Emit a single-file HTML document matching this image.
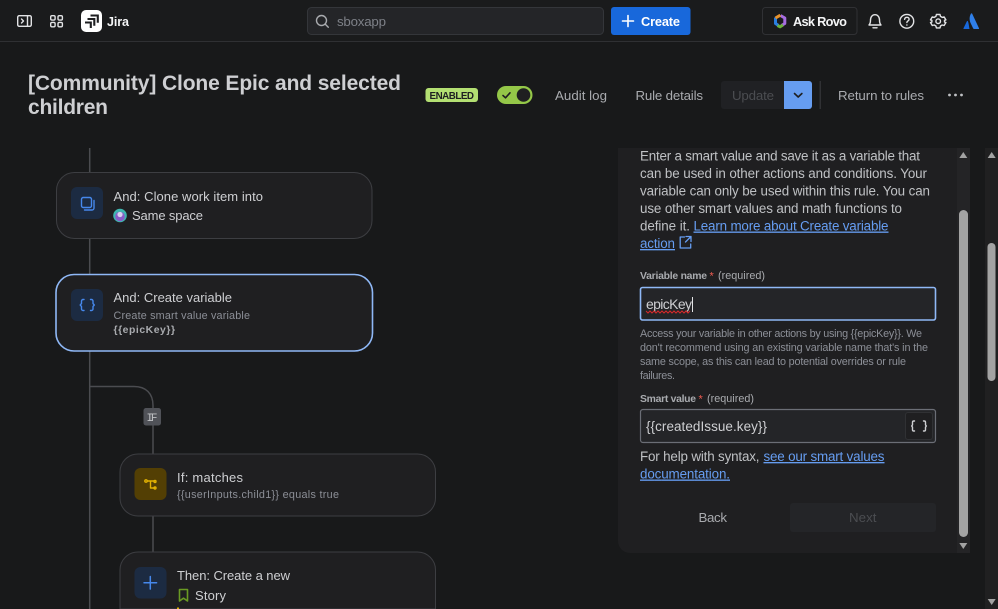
<!DOCTYPE html>
<html><head><meta charset="utf-8"><title>Jira</title>
<style>
html,body{margin:0;padding:0;background:#18191a;width:998px;height:609px;overflow:hidden}
svg{display:block}
text{font-family:"Liberation Sans",sans-serif;font-size:13px;fill:#cecfd2;white-space:pre}
.b{font-weight:bold}
.s{font-size:10.8px;fill:#8c8f97}
.n{font-size:13.3px;fill:#a9abaf}
.p{font-size:13.4px;fill:#bfc1c4}
.l{font-size:13.4px;fill:#669df1;text-decoration:underline}
.lb{font-size:10.4px;fill:#a9abaf;font-weight:bold}
.ic{fill:none;stroke-linecap:round;stroke-linejoin:round}
</style></head><body>
<svg width="998" height="609" viewBox="0 0 998 609" xmlns="http://www.w3.org/2000/svg">
<rect width="998" height="609" fill="#18191a"/>
<!-- top nav -->
<rect width="998" height="41" fill="#1a1b1c"/>
<rect y="41" width="998" height="1" fill="#2f3033"/>
<g class="ic" stroke="#e2e3e5" stroke-width="1.4">
<rect x="17.7" y="15.7" width="13.6" height="10.6" rx="1.5"/>
<path d="M27.5 16v10M21.5 19l2 2-2 2"/>
<rect x="50.7" y="15.7" width="4.4" height="4.4" rx="1.3"/>
<rect x="58" y="15.7" width="4.4" height="4.4" rx="1.3"/>
<rect x="50.7" y="22.4" width="4.4" height="4.4" rx="1.3"/>
<rect x="58" y="22.4" width="4.4" height="4.4" rx="1.3"/>
</g>
<rect x="81" y="10" width="21" height="22" rx="5" fill="#fff"/>
<path fill="none" stroke="#1e1f21" stroke-width="2.1" d="M90.500 15.500h7.300v7.300M87.500 19h6.800v6.800M85 22.500h5.800v5.500"/>
<text x="107" y="26" class="b" textLength="22" style="fill:#f4f5f6;font-size:12.5px">Jira</text>
<rect x="307.500" y="7.500" width="296" height="27" rx="4" fill="#242528" stroke="#34363a"/>
<g class="ic" stroke="#a9abaf" stroke-width="1.400"><circle cx="321.500" cy="20.500" r="5"/><path d="M325.300 24.300l3 3"/></g>
<text x="337" y="26" class="n" style="fill:#7e8188" textLength="49">sboxapp</text>
<rect x="611" y="7" width="79.500" height="28" rx="3" fill="#1868db"/>
<path class="ic" stroke="#fff" stroke-width="1.600" d="M628 15.500v11M622.500 21h11"/>
<text x="641" y="26" class="b" style="font-size:12.8px;fill:#fff" textLength="39">Create</text>
<rect x="762.500" y="7.500" width="94.500" height="27" rx="3" fill="#1a1b1c" stroke="#303134"/>
<g fill="none" stroke-width="3" stroke-linejoin="round">
<path stroke="#2a7fe0" d="M775.500 17.500V23.500L778.500 25.500"/>
<path stroke="#a66de0" d="M780.500 15.500L784.800 18V23.500L781.500 25.500"/>
<path stroke="#6cb33a" d="M777.500 25.500L780 26.800 783 25"/>
<path stroke="#e8932c" d="M775.500 18L780.300 15.200"/>
</g>
<text x="793" y="26" class="b" style="font-size:12.8px;fill:#f4f5f6" textLength="54">Ask Rovo</text>
<g class="ic" stroke="#e2e3e5" stroke-width="1.400">
<path d="M869 25c1.300-1.300 1.500-2.800 1.500-5 0-3.100 1.900-5.300 4.500-5.300s4.500 2.200 4.500 5.300c0 2.200.2 3.700 1.500 5z"/><path d="M873 27.800h4"/>
<circle cx="906.800" cy="21.300" r="6.900"/><path d="M904.600 19.300c.2-1.300 1.100-2 2.300-2 1.300 0 2.200.8 2.200 1.900 0 1.700-2.200 1.700-2.200 3.300M906.900 25v.1"/>
<circle cx="938.200" cy="21.200" r="2.300"/>
<path transform="translate(.2 .2)" d="M936.200 14.300H939.800L940.300 16.200 942 17.200 943.900 16.700 945.700 19.700 944.300 20.100V21.900L945.700 22.300 943.900 25.300 942 24.800 940.300 25.800 939.800 27.700H936.200L935.700 25.800 934 24.800 932.100 25.300 930.300 22.300 931.700 21.900V20.100L930.300 19.700 932.100 16.700 934 17.200 935.700 16.200Z"/>
</g>
<path d="M969.500 29h-5.500c-.5 0-.7-.4-.5-.8l3.400-7c.3-.5.8-.4 1 .1.800 1.800 1 4.600 1.600 7.700z" fill="#1868db"/>
<path d="M971 13.500c-2 3.500-1.600 7.200-.2 10l2.300 4.800c.2.400.4.700.9.700h4.500c.5 0 .7-.4.500-.8l-6.800-14.400c-.3-.6-.5-.6-.7-.3z" fill="#2f7fe8"/>

<!-- header -->
<text x="28" y="90" class="b" style="font-size:21px;fill:#cecfd2" textLength="373">[Community] Clone Epic and selected</text>
<text x="28" y="114" class="b" style="font-size:21px;fill:#cecfd2" textLength="80">children</text>
<rect x="425.500" y="88" width="52.500" height="14" rx="3" fill="#b3df72"/>
<text x="429.500" y="99" class="b" style="font-size:9.800px;fill:#1e1f21" textLength="44.500">ENABLED</text>
<rect x="497" y="86" width="35.500" height="18" rx="9" fill="#94c748"/>
<path class="ic" stroke="#1e1f21" stroke-width="1.600" d="M503 95.500l2.500 2.300 4.500-5"/>
<circle cx="523.500" cy="95" r="6.800" fill="#1f1f21"/>
<text x="555" y="100" class="n" textLength="52">Audit log</text>
<text x="635.500" y="100" class="n" textLength="67.500">Rule details</text>
<path d="M721 84a3 3 0 0 1 3-3h60v28h-60a3 3 0 0 1-3-3z" fill="#202124"/>
<text x="732" y="100" class="n" style="fill:#4b4d51" textLength="42">Update</text>
<path d="M784 81h25a3 3 0 0 1 3 3v22a3 3 0 0 1-3 3h-25z" fill="#669df1"/>
<path class="ic" stroke="#1e1f21" stroke-width="1.600" d="M794.500 93.500l3.700 3.500 3.700-3.500"/>
<rect x="819.500" y="81" width="1.500" height="28" fill="#303134"/>
<text x="838" y="100" class="n" textLength="86">Return to rules</text>
<g fill="#bfc1c4"><circle cx="949.500" cy="95" r="1.400"/><circle cx="955.500" cy="95" r="1.400"/><circle cx="961.500" cy="95" r="1.400"/></g>

<!-- connectors -->
<g fill="none" stroke="#4b4c50" stroke-width="1.500">
<path d="M89.700 148V609"/>
<path d="M90 386.500h44c12 0 19 7 19 19V552"/>
</g>

<!-- card 1 -->
<rect x="56.500" y="172.500" width="315.500" height="66" rx="18" fill="#1f1f21" stroke="#3d3e42"/>
<rect x="71" y="187" width="32" height="32" rx="6" fill="#1c2b42"/>
<g class="ic" stroke="#4688ec" stroke-width="1.400"><rect x="81.500" y="197.500" width="10" height="10" rx="1.800"/><path d="M94 200.500v7.500a2 2 0 0 1-2 2h-7.500"/></g>
<text x="113.500" y="201" textLength="149.500">And: Clone work item into</text>
<circle cx="120" cy="215.500" r="6.800" fill="#3fb5b0"/><circle cx="120" cy="216.500" r="4.800" fill="#8a5cc9"/><circle cx="120" cy="214.500" r="2.600" fill="#d8d3f0"/>
<text x="132" y="220" textLength="71">Same space</text>

<!-- card 2 -->
<rect x="56" y="274.500" width="316.500" height="76.500" rx="18" fill="#1f1f21" stroke="#8fb8f6" stroke-width="1.600"/>
<rect x="71" y="289" width="32" height="32" rx="6" fill="#1c2b42"/>
<path class="ic" stroke="#4688ec" stroke-width="1.400" d="M84 299.500h-1a1.500 1.500 0 0 0-1.500 1.500v2.500l-1.300 1.500 1.300 1.500v2.500a1.500 1.500 0 0 0 1.500 1.500h1M90.500 299.500h1a1.500 1.500 0 0 1 1.500 1.500v2.500l1.300 1.500-1.300 1.500v2.500a1.500 1.500 0 0 1-1.500 1.500h-1"/>
<text x="113.500" y="302" textLength="118.500">And: Create variable</text>
<text x="113.500" y="319" class="s" textLength="136.500">Create smart value variable</text>
<text x="113.500" y="333" class="s b" style="fill:#a9abaf;font-size:10.400px" textLength="61.500">{{epicKey}}</text>

<!-- IF -->
<rect x="143.500" y="408" width="17.500" height="17.500" rx="2.500" fill="#505258"/>
<text x="146.500" y="421" style="font-family:'Liberation Mono',monospace;font-size:11px;fill:#bfc1c4" textLength="11">IF</text>

<!-- card 3 -->
<rect x="120" y="454" width="315.500" height="62" rx="18" fill="#1f1f21" stroke="#3d3e42"/>
<rect x="134.500" y="468" width="32" height="32" rx="6" fill="#533f04"/>
<g class="ic" stroke="#e2b203" stroke-width="1.400"><circle cx="146" cy="481" r="1.200"/><circle cx="155" cy="481.500" r="1"/><circle cx="155" cy="488" r="1"/><path d="M147.500 481h7M150.500 481v7h4"/></g>
<text x="177" y="482" textLength="66">If: matches</text>
<text x="177" y="498" class="s" textLength="162">{{userInputs.child1}} equals true</text>

<!-- card 4 -->
<path d="M120 609V570a18 18 0 0 1 18-18H417.500a18 18 0 0 1 18 18V609z" fill="#1f1f21" stroke="#3d3e42"/>
<rect x="134.500" y="567" width="32" height="31.500" rx="6" fill="#1c2b42"/>
<path class="ic" stroke="#4688ec" stroke-width="1.500" d="M150.300 576.500v12.500M144 582.800h12.600"/>
<text x="177" y="580" textLength="113">Then: Create a new</text>
<path class="ic" stroke="#6a9a23" stroke-width="1.600" d="M179.500 589.500h8v11.500l-4-2.800-4 2.800z"/>
<text x="195" y="600" textLength="31">Story</text>
<rect x="177" y="607.500" width="2" height="1.500" fill="#e2b203"/>

<!-- right panel -->
<path d="M618 148H970V553H630a12 12 0 0 1-12-12z" fill="#1f1f21"/>
<rect x="957" y="148" width="13" height="405" fill="#242426"/>
<rect x="959" y="210" width="9" height="327" rx="4.500" fill="#a3a3a3"/>
<path d="M963.300 152l4 6h-8z" fill="#a3a3a3"/><path d="M959.300 543h8l-4 6z" fill="#a3a3a3"/>
<rect x="985" y="148" width="13" height="461" fill="#202021"/>
<rect x="987.500" y="243" width="8" height="138" rx="4" fill="#a3a3a3"/>
<path d="M991.700 152l4 6h-8z" fill="#a3a3a3"/><path d="M987.700 599h8l-4 6z" fill="#a3a3a3"/>
<text x="640" y="160.500" class="p" textLength="280">Enter a smart value and save it as a variable that</text>
<text x="640" y="178" class="p" textLength="287">can be used in other actions and conditions. Your</text>
<text x="640" y="195.500" class="p" textLength="290">variable can only be used within this rule. You can</text>
<text x="640" y="213" class="p" textLength="262">use other smart values and math functions to</text>
<text x="640" y="230.500" class="p" textLength="50">define it.</text>
<text x="693.500" y="230.500" class="l" textLength="195">Learn more about Create variable</text>
<text x="640" y="248" class="l" textLength="35">action</text>
<path class="ic" stroke="#669df1" stroke-width="1.300" d="M684.500 237h-4.300v11h10.500v-4M686 236.500h5v5M691 236.500l-5.500 5.500"/>
<text x="640" y="279" class="lb" textLength="67">Variable name</text>
<text x="709.500" y="279.500" style="font-size:11px;fill:#f15b50">*</text>
<text x="718" y="279" class="s" style="fill:#a9abaf" textLength="47">(required)</text>
<rect x="640.500" y="287.500" width="295" height="32.500" rx="2" fill="#242528" stroke="#8fb8f6" stroke-width="1.600"/>
<text x="646" y="309" style="font-size:14px" textLength="46">epicKey</text>
<rect x="692" y="297" width="1" height="15" fill="#e2e3e5"/>
<path fill="none" stroke="#d8282a" stroke-width="1" d="M646 311l2 2 2-2 2 2 2-2 2 2 2-2 2 2 2-2 2 2 2-2 2 2 2-2 2 2 2-2 2 2 2-2 2 2 2-2 2 2 2-2 2 2 2-2"/>
<text x="640" y="337" class="s" textLength="282">Access your variable in other actions by using {{epicKey}}. We</text>
<text x="640" y="351" class="s" textLength="288">don't recommend using an existing variable name that's in the</text>
<text x="640" y="365" class="s" textLength="266">same scope, as this can lead to potential overrides or rule</text>
<text x="640" y="379" class="s" textLength="35">failures.</text>
<text x="640" y="402" class="lb" textLength="56">Smart value</text>
<text x="698.500" y="402.500" style="font-size:11px;fill:#f15b50">*</text>
<text x="707" y="402" class="s" style="fill:#a9abaf" textLength="47">(required)</text>
<rect x="640.500" y="409.500" width="295" height="33" rx="2.500" fill="#242528" stroke="#6b6e76" stroke-width="1.200"/>
<text x="646" y="431" style="font-size:13.500px" textLength="121">{{createdIssue.key}}</text>
<rect x="905.500" y="412.500" width="27" height="27" rx="2.500" fill="#1f1f21" stroke="#303134"/>
<path class="ic" stroke="#cecfd2" stroke-width="1.400" d="M914.500 421h-.7a1.300 1.300 0 0 0-1.300 1.300v2.500l-.8 1.200.8 1.200v2.500a1.300 1.300 0 0 0 1.300 1.300h.7M923.500 421h.7a1.300 1.300 0 0 1 1.300 1.300v2.500l.8 1.200-.8 1.200v2.500a1.300 1.300 0 0 1-1.300 1.300h-.7"/>
<text x="640" y="461" class="p" textLength="119.500">For help with syntax,</text>
<text x="763.500" y="461" class="l" textLength="121">see our smart values</text>
<text x="640" y="478.500" class="l" textLength="90">documentation.</text>
<text x="698.500" y="522" class="n" textLength="28.500">Back</text>
<rect x="790" y="503" width="146" height="29" rx="3" fill="#242528"/>
<text x="849" y="522" class="n" style="fill:#4b4d51" textLength="27.500">Next</text>
</svg>
</body></html>
